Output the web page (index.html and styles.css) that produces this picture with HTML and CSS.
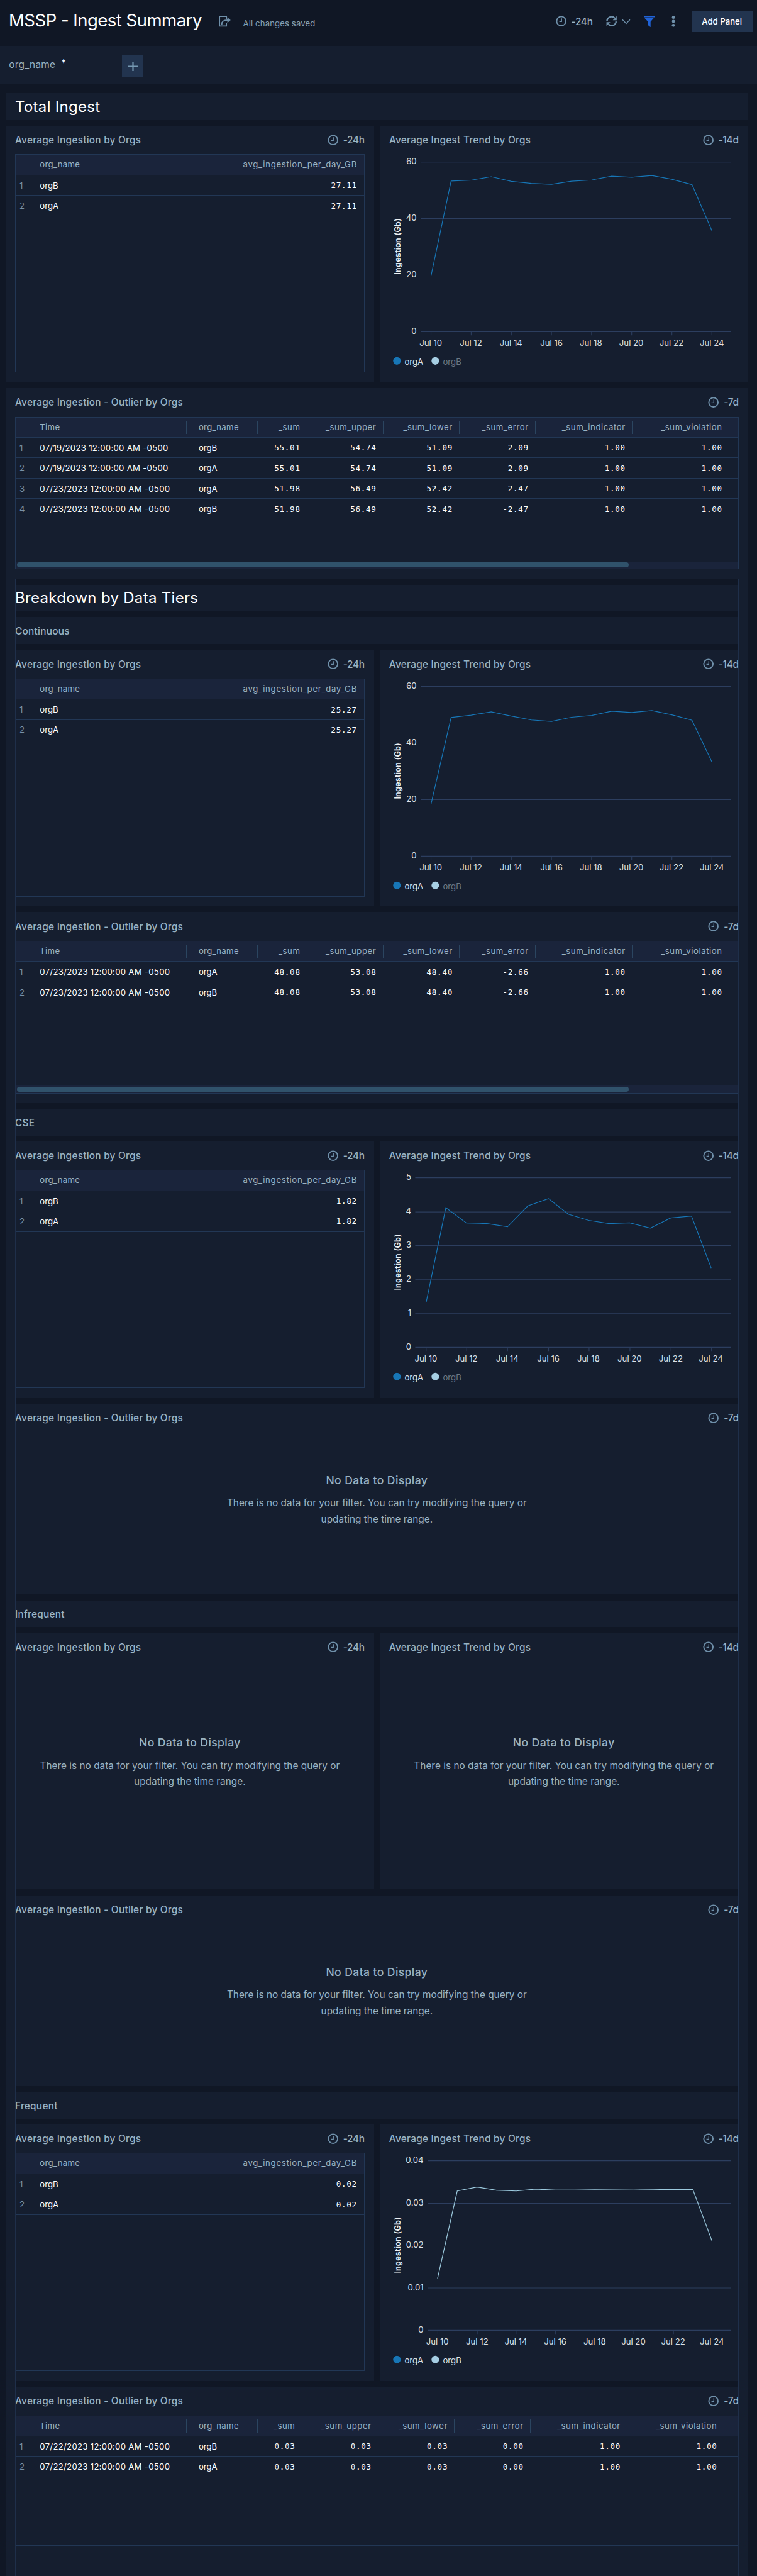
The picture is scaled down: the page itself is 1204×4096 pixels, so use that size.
FILE: index.html
```html
<!DOCTYPE html>
<html lang="en">
<head>
<meta charset="utf-8">
<title>MSSP - Ingest Summary</title>
<link rel="stylesheet" href="styles.css">
</head>
<body>
<svg class="defs" aria-hidden="true">
  <symbol id="clock" viewBox="0 0 18 18"><circle cx="9" cy="9" r="7.6" fill="none" stroke="currentColor" stroke-width="2"/><path d="M9.6 4.4V9.6H5.8" fill="none" stroke="currentColor" stroke-width="1.3"/></symbol>
</svg>

<header class="topbar">
  <h1 class="title">MSSP - Ingest Summary</h1>
  <svg class="share" viewBox="0 0 19 18"><path d="M12.2 5V1.2H1.2V16.4H12.2V11.5" fill="none" stroke="currentColor" stroke-width="1.7"/><path d="M4.6 14.2C4.6 9.2 7 7 14 7" fill="none" stroke="currentColor" stroke-width="2"/><path d="M13.6 2.6L18.8 7L13.6 11.4Z" fill="currentColor"/></svg>
  <span class="saved">All changes saved</span>
  <div class="tools">
    <svg class="clock"><use href="#clock"/></svg><span class="range">-24h</span>
    <svg class="refresh" viewBox="0 0 18 18"><g fill="none" stroke="currentColor" stroke-width="2.5"><path d="M1.5 8.6A7.4 7.4 0 0 1 14.4 4.2"/><path d="M16.5 9.4A7.4 7.4 0 0 1 3.6 13.8"/></g><path d="M17.4.8V7.4H11Z M.6 17.2V10.6H7Z" fill="currentColor"/></svg>
    <svg class="chev" viewBox="0 0 14 9"><path d="M1 1.2L7 7.4L13 1.2" fill="none" stroke="currentColor" stroke-width="1.4"/></svg>
    <svg class="filter" viewBox="0 0 17 18"><path d="M0 0H17V2.3H0Z M1.2 3.6H15.8L10.7 9.2V18L6.7 14.7V9.2Z" fill="currentColor"/></svg>
    <svg class="dots" viewBox="0 0 6 18"><g fill="currentColor"><circle cx="3" cy="2.7" r="2.4"/><circle cx="3" cy="9" r="2.4"/><circle cx="3" cy="15.3" r="2.4"/></g></svg>
    <button class="add">Add Panel</button>
  </div>
</header>

<div class="filters">
  <span class="flabel">org_name</span><span class="finput">*</span>
  <button class="plus"><svg viewBox="0 0 15 15"><path d="M7.5 0V15M0 7.5H15" stroke="currentColor" stroke-width="2.2"/></svg></button>
</div>

<main class="board">
  <section class="panel section big">Total Ingest</section>
  <div class="pair">
    <section class="panel half">
      <div class="head"><h2>Average Ingestion by Orgs</h2><svg class="clock"><use href="#clock"/></svg><span class="range">-24h</span></div>
      <div class="table small">
        <div class="row th"><i></i><span>org_name</span><span class="r">avg_ingestion_per_day_GB</span></div>
        <div class="row"><i>1</i><span>orgB</span><b>27.11</b></div>
        <div class="row"><i>2</i><span>orgA</span><b>27.11</b></div>
      </div>
    </section>
    <section class="panel half">
      <div class="head"><h2>Average Ingest Trend by Orgs</h2><svg class="clock"><use href="#clock"/></svg><span class="range">-14d</span></div>
      <svg class="chart" viewBox="0 82 1064 659">
        <path class="grid" d="M118 105H1015M118 268.5H1015M118 432H1015M118 595.5H1015M147.6 596v10M263.7 596v10M379.9 596v10M496 596v10M612 596v10M728 596v10M844.4 596v10M960 596v10"/>
        <g class="yl"><text x="106" y="112">60</text><text x="106" y="275">40</text><text x="106" y="438">20</text><text x="106" y="602">0</text></g>
        <g class="xl"><text x="147" y="636">Jul 10</text><text x="263" y="636">Jul 12</text><text x="379" y="636">Jul 14</text><text x="496" y="636">Jul 16</text><text x="610" y="636">Jul 18</text><text x="727" y="636">Jul 20</text><text x="843" y="636">Jul 22</text><text x="960" y="636">Jul 24</text></g>
        <text class="axis" transform="translate(60 349) rotate(-90)">Ingestion (Gb)</text>
        <polyline class="la" points="147.6,434.5 205.7,160 263.7,157.5 321.8,147.5 379.9,160.7 438,166.7 496,169.6 554,160.6 612,157 670,146 728,149 786.4,144 844.4,155 902.5,170.3 960,303.5"/>
        <circle class="da" cx="49" cy="680" r="11"/><text class="lg" x="71" y="691">orgA</text><circle class="db" cx="160" cy="680" r="11"/><text class="lg off" x="182" y="691">orgB</text>
      </svg>
    </section>
  </div>
  <section class="panel full">
    <div class="head"><h2>Average Ingestion - Outlier by Orgs</h2><svg class="clock"><use href="#clock"/></svg><span class="range">-7d</span></div>
    <div class="table wide">
      <div class="row th"><i></i><span>Time</span><span class="o">org_name</span><span class="r">_sum</span><span class="r">_sum_upper</span><span class="r">_sum_lower</span><span class="r">_sum_error</span><span class="r">_sum_indicator</span><span class="r">_sum_violation</span></div>
      <div class="row"><i>1</i><span class="t">07/19/2023 12:00:00 AM -0500</span><span class="o">orgB</span><b>55.01</b><b>54.74</b><b>51.09</b><b>2.09</b><b>1.00</b><b>1.00</b></div>
      <div class="row"><i>2</i><span class="t">07/19/2023 12:00:00 AM -0500</span><span class="o">orgA</span><b>55.01</b><b>54.74</b><b>51.09</b><b>2.09</b><b>1.00</b><b>1.00</b></div>
      <div class="row"><i>3</i><span class="t">07/23/2023 12:00:00 AM -0500</span><span class="o">orgA</span><b>51.98</b><b>56.49</b><b>52.42</b><b>-2.47</b><b>1.00</b><b>1.00</b></div>
      <div class="row"><i>4</i><span class="t">07/23/2023 12:00:00 AM -0500</span><span class="o">orgB</span><b>51.98</b><b>56.49</b><b>52.42</b><b>-2.47</b><b>1.00</b><b>1.00</b></div>
      <div class="scroll"><div class="thumb"></div></div>
    </div>
  </section>

  <div class="stack"><div class="inner">
  <section class="panel section big">Breakdown by Data Tiers</section>
  <section class="panel section">Continuous</section>
  <div class="pair">
    <section class="panel half">
      <div class="head"><h2>Average Ingestion by Orgs</h2><svg class="clock"><use href="#clock"/></svg><span class="range">-24h</span></div>
      <div class="table small">
        <div class="row th"><i></i><span>org_name</span><span class="r">avg_ingestion_per_day_GB</span></div>
        <div class="row"><i>1</i><span>orgB</span><b>25.27</b></div>
        <div class="row"><i>2</i><span>orgA</span><b>25.27</b></div>
      </div>
    </section>
    <section class="panel half">
      <div class="head"><h2>Average Ingest Trend by Orgs</h2><svg class="clock"><use href="#clock"/></svg><span class="range">-14d</span></div>
      <svg class="chart" viewBox="0 82 1064 659">
        <path class="grid" d="M118 105H1015M118 268.5H1015M118 432H1015M118 595.5H1015M147.6 596v10M263.7 596v10M379.9 596v10M496 596v10M612 596v10M728 596v10M844.4 596v10M960 596v10"/>
        <g class="yl"><text x="106" y="112">60</text><text x="106" y="275">40</text><text x="106" y="438">20</text><text x="106" y="602">0</text></g>
        <g class="xl"><text x="147" y="636">Jul 10</text><text x="263" y="636">Jul 12</text><text x="379" y="636">Jul 14</text><text x="496" y="636">Jul 16</text><text x="610" y="636">Jul 18</text><text x="727" y="636">Jul 20</text><text x="843" y="636">Jul 22</text><text x="960" y="636">Jul 24</text></g>
        <text class="axis" transform="translate(60 349) rotate(-90)">Ingestion (Gb)</text>
        <polyline class="la" points="147.6,445.3 205.7,194.6 263.7,187.7 321.8,178.1 379.9,190.3 438,201.6 496,205.9 554,193.8 612,188.5 670,176.4 728,179.9 786.4,174.7 844.4,186.8 902.5,202.4 960,323"/>
        <circle class="da" cx="49" cy="680" r="11"/><text class="lg" x="71" y="691">orgA</text><circle class="db" cx="160" cy="680" r="11"/><text class="lg off" x="182" y="691">orgB</text>
      </svg>
    </section>
  </div>
  <section class="panel full">
    <div class="head"><h2>Average Ingestion - Outlier by Orgs</h2><svg class="clock"><use href="#clock"/></svg><span class="range">-7d</span></div>
    <div class="table wide">
      <div class="row th"><i></i><span>Time</span><span class="o">org_name</span><span class="r">_sum</span><span class="r">_sum_upper</span><span class="r">_sum_lower</span><span class="r">_sum_error</span><span class="r">_sum_indicator</span><span class="r">_sum_violation</span></div>
      <div class="row"><i>1</i><span class="t">07/23/2023 12:00:00 AM -0500</span><span class="o">orgA</span><b>48.08</b><b>53.08</b><b>48.40</b><b>-2.66</b><b>1.00</b><b>1.00</b></div>
      <div class="row"><i>2</i><span class="t">07/23/2023 12:00:00 AM -0500</span><span class="o">orgB</span><b>48.08</b><b>53.08</b><b>48.40</b><b>-2.66</b><b>1.00</b><b>1.00</b></div>
      <div class="scroll"><div class="thumb"></div></div>
    </div>
  </section>

  <section class="panel section">CSE</section>
  <div class="pair">
    <section class="panel half">
      <div class="head"><h2>Average Ingestion by Orgs</h2><svg class="clock"><use href="#clock"/></svg><span class="range">-24h</span></div>
      <div class="table small">
        <div class="row th"><i></i><span>org_name</span><span class="r">avg_ingestion_per_day_GB</span></div>
        <div class="row"><i>1</i><span>orgB</span><b>1.82</b></div>
        <div class="row"><i>2</i><span>orgA</span><b>1.82</b></div>
      </div>
    </section>
    <section class="panel half">
      <div class="head"><h2>Average Ingest Trend by Orgs</h2><svg class="clock"><use href="#clock"/></svg><span class="range">-14d</span></div>
      <svg class="chart" viewBox="0 82 1064 659">
        <path class="grid" d="M102 105H1015M102 204H1015M102 301.3H1015M102 400H1015M102 497H1015M102 595.5H1015M133.6 596v10M250.7 596v10M369 596v10M487.7 596v10M604.8 596v10M723 596v10M841.8 596v10M959 596v10"/>
        <g class="yl"><text x="90.5" y="112">5</text><text x="90.5" y="210">4</text><text x="90.5" y="308">3</text><text x="90.5" y="406">2</text><text x="90.5" y="504">1</text><text x="90.5" y="602">0</text></g>
        <g class="xl"><text x="133" y="636">Jul 10</text><text x="250" y="636">Jul 12</text><text x="368" y="636">Jul 14</text><text x="487" y="636">Jul 16</text><text x="603" y="636">Jul 18</text><text x="722" y="636">Jul 20</text><text x="841" y="636">Jul 22</text><text x="957" y="636">Jul 24</text></g>
        <text class="axis" transform="translate(60 349) rotate(-90)">Ingestion (Gb)</text>
        <polyline class="la" points="133.6,465.5 190.5,191.7 250,235.9 310,237.6 369,246.8 427.5,186.5 487.5,165.3 545,210.6 604,228.4 663,237.6 722,235.3 782,250.8 841,221.5 901,215.8 958,366.2"/>
        <circle class="da" cx="49" cy="680" r="11"/><text class="lg" x="71" y="691">orgA</text><circle class="db" cx="160" cy="680" r="11"/><text class="lg off" x="182" y="691">orgB</text>
      </svg>
    </section>
  </div>
  <section class="panel full">
    <div class="head"><h2>Average Ingestion - Outlier by Orgs</h2><svg class="clock"><use href="#clock"/></svg><span class="range">-7d</span></div>
    <div class="empty"><h3>No Data to Display</h3><p>There is no data for your filter. You can try modifying the query or<br>updating the time range.</p></div>
  </section>

  <section class="panel section">Infrequent</section>
  <div class="pair">
    <section class="panel half">
      <div class="head"><h2>Average Ingestion by Orgs</h2><svg class="clock"><use href="#clock"/></svg><span class="range">-24h</span></div>
      <div class="empty"><h3>No Data to Display</h3><p>There is no data for your filter. You can try modifying the query or<br>updating the time range.</p></div>
    </section>
    <section class="panel half">
      <div class="head"><h2>Average Ingest Trend by Orgs</h2><svg class="clock"><use href="#clock"/></svg><span class="range">-14d</span></div>
      <div class="empty"><h3>No Data to Display</h3><p>There is no data for your filter. You can try modifying the query or<br>updating the time range.</p></div>
    </section>
  </div>
  <section class="panel full">
    <div class="head"><h2>Average Ingestion - Outlier by Orgs</h2><svg class="clock"><use href="#clock"/></svg><span class="range">-7d</span></div>
    <div class="empty"><h3>No Data to Display</h3><p>There is no data for your filter. You can try modifying the query or<br>updating the time range.</p></div>
  </section>

  <section class="panel section">Frequent</section>
  <div class="pair">
    <section class="panel half">
      <div class="head"><h2>Average Ingestion by Orgs</h2><svg class="clock"><use href="#clock"/></svg><span class="range">-24h</span></div>
      <div class="table small">
        <div class="row th"><i></i><span>org_name</span><span class="r">avg_ingestion_per_day_GB</span></div>
        <div class="row"><i>1</i><span>orgB</span><b>0.02</b></div>
        <div class="row"><i>2</i><span>orgA</span><b>0.02</b></div>
      </div>
    </section>
    <section class="panel half">
      <div class="head"><h2>Average Ingest Trend by Orgs</h2><svg class="clock"><use href="#clock"/></svg><span class="range">-14d</span></div>
      <svg class="chart" viewBox="0 82 1064 659">
        <path class="grid" d="M138 105H1015M138 228.5H1015M138 352H1015M138 473H1015M138 595.5H1015M167.5 596v10M281.4 596v10M393.6 596v10M508 596v10M622.3 596v10M734.5 596v10M848.8 596v10M960.4 596v10"/>
        <g class="yl"><text x="126" y="112">0.04</text><text x="126" y="235">0.03</text><text x="126" y="357">0.02</text><text x="126" y="480">0.01</text><text x="126" y="602">0</text></g>
        <g class="xl"><text x="166" y="636">Jul 10</text><text x="281" y="636">Jul 12</text><text x="393" y="636">Jul 14</text><text x="507" y="636">Jul 16</text><text x="621" y="636">Jul 18</text><text x="733" y="636">Jul 20</text><text x="848" y="636">Jul 22</text><text x="960" y="636">Jul 24</text></g>
        <text class="axis" transform="translate(60 349) rotate(-90)">Ingestion (Gb)</text>
        <polyline class="lb" points="166.5,445.6 223.5,192.5 280.5,181.3 337,190.5 394,192.5 450,187.4 507,190 564,189.8 620.5,189 677,189.6 734,190 791,188.8 848,187.8 905,188.4 960,336"/>
        <circle class="da" cx="49" cy="680" r="11"/><text class="lg" x="71" y="691">orgA</text><circle class="db" cx="160" cy="680" r="11"/><text class="lg" x="182" y="691">orgB</text>
      </svg>
    </section>
  </div>
  <section class="panel full last">
    <div class="head"><h2>Average Ingestion - Outlier by Orgs</h2><svg class="clock"><use href="#clock"/></svg><span class="range">-7d</span></div>
    <div class="table wide tight">
      <div class="row th"><i></i><span>Time</span><span class="o">org_name</span><span class="r">_sum</span><span class="r">_sum_upper</span><span class="r">_sum_lower</span><span class="r">_sum_error</span><span class="r">_sum_indicator</span><span class="r">_sum_violation</span></div>
      <div class="row"><i>1</i><span class="t">07/22/2023 12:00:00 AM -0500</span><span class="o">orgB</span><b>0.03</b><b>0.03</b><b>0.03</b><b>0.00</b><b>1.00</b><b>1.00</b></div>
      <div class="row"><i>2</i><span class="t">07/22/2023 12:00:00 AM -0500</span><span class="o">orgA</span><b>0.03</b><b>0.03</b><b>0.03</b><b>0.00</b><b>1.00</b><b>1.00</b></div>
    </div>
  </section>
  </div></div>
</main>
</body>
</html>
```
FILE: styles.css
```css
* { box-sizing: border-box; }
:root {
  --bg: #101725;
  --panel: #151e2f;
  --line: #223755;
  --muted: #9ab3c3;
  --icon: #6f90aa;
}
body {
  margin: 0;
  width: 1204px;
  height: 4096px;
  overflow: hidden;
  background: var(--bg);
  color: #fff;
  font-family: Inter, "Liberation Sans", sans-serif;
  font-size: 13.2px;
}
.defs { display: none; }
h1, h2, h3, p { margin: 0; font-weight: 400; }
svg { display: block; flex: none; }
button { border: 0; padding: 0; font: inherit; color: inherit; background: #22344f; }
.clock { width: 17.4px; height: 17.4px; color: var(--icon); }
.range { margin-left: 7.6px; color: var(--muted); font-size: 15.4px; font-weight: 500; letter-spacing: -.3px; white-space: nowrap; }

.topbar { display: flex; align-items: center; height: 73.2px; padding: 0 7.4px 9.8px 14px; white-space: nowrap; }
.title { width: 333.5px; font-size: 27.5px; line-height: 34px; letter-spacing: -.5px; }
.share { width: 19px; height: 18px; margin-top: 5px; color: var(--icon); }
.saved { margin: 10px 0 0 20px; color: #86a0b4; letter-spacing: .1px; }
.tools { display: flex; align-items: center; margin: 5px 0 0 auto; color: var(--icon); }
.refresh { width: 17.4px; height: 17.4px; margin-left: 21px; }
.chev { width: 14px; height: 9px; margin-left: 7.5px; }
.filter { width: 17px; height: 18.4px; margin-left: 21px; color: #2063d8; }
.dots { width: 6px; height: 18px; margin-left: 27.3px; }
.add { width: 96.8px; height: 34.2px; margin-left: 26px; color: #fff; font-weight: 500; }

.filters { display: flex; height: 60.5px; padding: 0 0 0 14.3px; align-items: center; background: var(--panel); }
.flabel { width: 83px; font-size: 15.4px; letter-spacing: .25px; color: var(--muted); margin-bottom: 1px; }
.finput { width: 60.5px; height: 34px; padding-top: 5px; font-size: 15.4px; border-bottom: 1.5px solid #386282; margin-bottom: 1px; }
.plus { display: flex; align-items: center; justify-content: center; width: 34px; height: 34px; margin: 4px 0 0 36.5px; color: #7699b3; }
.plus svg { width: 15px; height: 15px; }

.board { display: flex; flex-direction: column; gap: 9.2px; padding: 14.4px 14.5px 0 8.8px; }
.panel { background: var(--panel); flex: none; }
.section { height: 42.7px; padding: 2px 0 0 15.2px; display: flex; align-items: center; color: var(--muted); font-size: 15.4px; font-weight: 500; letter-spacing: .25px; }
.section.big { color: #fff; font-size: 24px; font-weight: 400; letter-spacing: .3px; padding-top: 0; }
.pair { display: grid; grid-template-columns: 585.9px 585.8px; gap: 9px; height: 407.9px; flex: none; }
.half { display: flex; flex-direction: column; padding: 0 14.9px 0 15.2px; }
.full { display: flex; flex-direction: column; height: 303.4px; padding: 0 14.8px 0 15.2px; }
.head { display: flex; align-items: center; height: 45.5px; flex: none; white-space: nowrap; }
.head h2 { margin-right: auto; color: var(--muted); font-size: 15.4px; font-weight: 500; letter-spacing: .24px; }

.table { display: flex; flex-direction: column; border: 1px solid var(--line); }
.small { height: 346.8px; --cols: 38.3px 277.5px 1fr; }
.wide { height: 242.6px; --cols: 38.3px 234px 112.3px 79.1px 120.9px 121.4px 120.9px 154px 153.9px; }
.tight { height: 207.3px; --cols: 38.3px 234px 112.3px 71px 121.3px 121.3px 120.7px 154.2px 153.5px; }
.row { display: grid; grid-template-columns: var(--cols); align-items: center; height: 32.45px; flex: none; border-bottom: 1px solid var(--line); white-space: nowrap; }
.row i { padding-left: 6px; font-style: normal; color: #7890a8; }
.row b { text-align: right; font: 400 12.6px "DejaVu Sans Mono", monospace; letter-spacing: .7px; padding-right: 11px; }
.row .t { letter-spacing: .28px; }
.row .o { padding-left: 18.6px; }
.th { background: #1a243b; color: var(--muted); }
.th span { line-height: 21.5px; border-right: 1px solid #2b4560; letter-spacing: .3px; }
.th .r { text-align: right; padding-right: 10.2px; letter-spacing: .55px; }
.small .th .r { border: 0; padding-right: 10.8px; letter-spacing: .7px; }
.scroll { margin-top: auto; height: 11.6px; padding: 1.8px 2.5px; background: #1a243b; }
.thumb { width: 972.5px; height: 8px; border-radius: 4px; background: #30526b; }

.chart { width: 585.8px; height: 362.4px; margin-left: -15.2px; font-size: 24px; }
.chart .grid { fill: none; stroke: #2c3e5f; stroke-width: 2; }
.yl { text-anchor: end; fill: #dde1e6; }
.xl { text-anchor: middle; fill: #dde1e6; }
.axis { text-anchor: middle; fill: #eef1f4; font-size: 23px; font-weight: 600; letter-spacing: .4px; }
.lg { fill: #dde1e6; }
.lg.off { fill: #6c7784; }
.la, .lb { fill: none; stroke: #1776b6; stroke-width: 2.2; }
.lb { stroke: #9ccade; }
.da { fill: #1776b6; }
.db { fill: #a6cee3; }

.empty { flex: 1; display: flex; flex-direction: column; align-items: center; justify-content: center; padding-bottom: 41.8px; text-align: center; color: var(--muted); }
.full .empty { padding-bottom: 43px; }
.empty h3 { font-size: 17.6px; font-weight: 500; line-height: 26px; letter-spacing: .38px; }
.empty p { margin-top: 10.4px; font-size: 15.4px; line-height: 25.7px; white-space: nowrap; }

/* Nested area: its edges run down both sides of the stacked panels */
.stack { margin-top: -9.2px; padding: 0 14.8px 0 15.2px; background: var(--panel); flex: none; }
.inner { position: relative; display: flex; flex-direction: column; gap: 9.2px; padding-top: 9.2px; background: var(--bg); }
.inner::after { content: ""; position: absolute; inset: 0; border: solid #1f2f4a; border-width: 0 1px; }
.inner .section { padding-left: 0; }
.inner .pair { grid-template-columns: 570.7px 571px; }
.inner .half:first-child { padding-left: 0; }
.inner .half:last-child { padding-right: 0; }
.inner .full { padding: 0; }
.inner .last { height: 304px; }
```
